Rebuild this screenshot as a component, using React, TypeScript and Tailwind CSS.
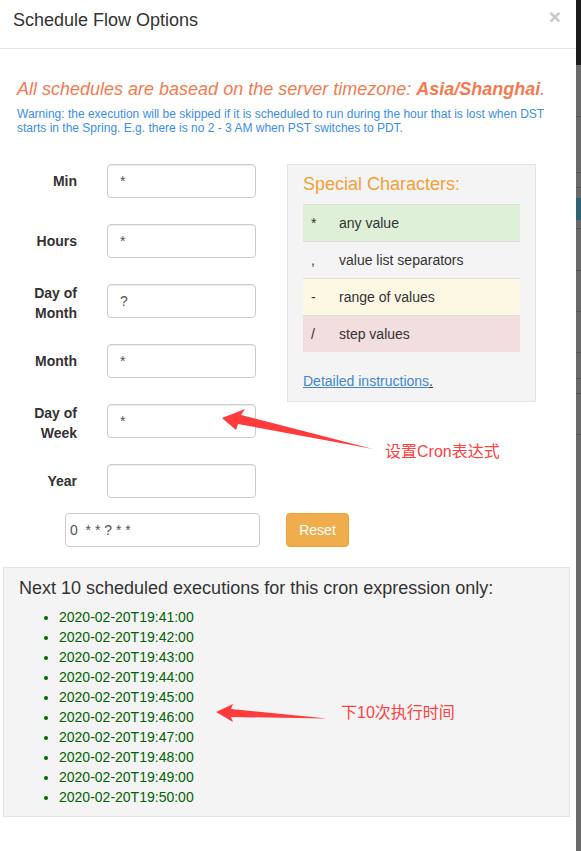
import React from 'react';

const fields = [
  { label: ['Min'], value: '*' },
  { label: ['Hours'], value: '*' },
  { label: ['Day of', 'Month'], value: '?' },
  { label: ['Month'], value: '*' },
  { label: ['Day of', 'Week'], value: '*' },
  { label: ['Year'], value: '' },
];

const specials = [
  { ch: '*', text: 'any value', bg: 'bg-[#dff0d8]' },
  { ch: ',', text: 'value list separators', bg: '' },
  { ch: '-', text: 'range of values', bg: 'bg-[#fcf8e3]' },
  { ch: '/', text: 'step values', bg: 'bg-[#f2dede]' },
];

const runs = [41, 42, 43, 44, 45, 46, 47, 48, 49, 50].map((m) => `2020-02-20T19:${m}:00`);

function FieldRow({ label, value }: { label: string[]; value: string }) {
  const twoLines = label.length > 1;
  return (
    <div className="flex items-start h-[34px]">
      <label
        className={`w-[77px] text-right font-bold text-[14px] leading-[20px] text-[#333] ${
          twoLines ? 'mt-[-1px]' : 'mt-[7px]'
        }`}
      >
        {label.map((l) => (
          <div key={l}>{l}</div>
        ))}
      </label>
      <input
        readOnly
        value={value}
        className="ml-[30px] h-[34px] w-[149px] rounded-[4px] border border-[#ccc] px-[12px] text-[14px] text-[#555] shadow-[inset_0_1px_1px_rgba(0,0,0,0.075)] outline-none"
      />
    </div>
  );
}

export default function App() {
  return (
    <div className="relative flex w-[581px] h-[851px] overflow-hidden bg-white font-['Liberation_Sans','Noto_Sans_CJK_SC',sans-serif] text-[#333]">
      <div className="flex w-[576px] flex-col">
        {/* header */}
        <div className="flex h-[49px] justify-between border-b border-[#e5e5e5]">
          <div className="pl-[13px] pt-[8px] text-[18px] leading-[24px]">Schedule Flow Options</div>
          <span className="mt-[6px] pr-[15px] text-[21px] font-bold leading-[21px] text-[#c8c8c8]">×</span>
        </div>

        <div className="px-[17px]">
          <p className="mt-[30px] text-[18px] italic leading-[20px] text-[#f47b50]">
            All schedules are basead on the server timezone: <b className="font-bold">Asia/Shanghai</b>.
          </p>
          <p className="mt-[8px] text-[12px] leading-[14px] text-[#3c8dee]">
            Warning: the execution will be skipped if it is scheduled to run during the hour that is lost when DST
            starts in the Spring. E.g. there is no 2 - 3 AM when PST switches to PDT.
          </p>
        </div>

        {/* cron fields + special chars */}
        <div className="mt-[29px] flex items-start">
          <div className="flex flex-col gap-[26px]">
            {fields.map((f) => (
              <FieldRow key={f.label.join(' ')} label={f.label} value={f.value} />
            ))}
          </div>
          <div className="ml-[31px] w-[249px] border border-[#e3e3e3] bg-[#f4f4f4] px-[15px] pt-[9px] pb-[10px]">
            <div className="text-[18px] leading-[20px] text-[#f3a03a]">Special Characters:</div>
            <table className="mt-[10px] w-full text-[14px] leading-[20px]">
              <tbody>
                {specials.map((s) => (
                  <tr key={s.ch} className={s.bg}>
                    <td className="w-[36px] border-t border-[#ddd] px-[8px] py-[8px]">{s.ch}</td>
                    <td className="border-t border-[#ddd] py-[8px]">{s.text}</td>
                  </tr>
                ))}
              </tbody>
            </table>
            <div className="mt-[19px] text-[14px] leading-[20px]">
              <span className="text-[#3f87d0] underline">Detailed instructions</span>
              <span className="underline">.</span>
            </div>
          </div>
        </div>

        {/* expression + reset */}
        <div className="mt-[15px] flex items-center">
          <input
            readOnly
            value="0  * * ? * *"
            className="ml-[65px] h-[34px] w-[195px] rounded-[4px] border border-[#ccc] px-[4px] text-[14px] text-[#555] outline-none"
          />
          <button className="ml-[26px] h-[34px] w-[63px] rounded-[4px] border border-[#eea236] bg-[#f0ad4e] text-[14px] text-white">
            Reset
          </button>
        </div>

        {/* next executions */}
        <div className="ml-[3px] mt-[20px] w-[567px] border border-[#e3e3e3] bg-[#f4f4f4] px-[15px] pt-[10px] pb-[9px]">
          <h4 className="text-[18px] leading-[20px]">Next 10 scheduled executions for this cron expression only:</h4>
          <ul className="mt-[9px] list-disc pl-[40px] text-[14px] leading-[20px] text-[#006400]">
            {runs.map((r) => (
              <li key={r}>{r}</li>
            ))}
          </ul>
        </div>
      </div>

      {/* backdrop strip behind the modal */}
      <div className="flex w-[5px] flex-col bg-[#6a6a6a]">
        <div className="h-[65px] bg-[#1c1c1c]" />
        <div className="h-[52px] border-b border-[#555]" />
        <div className="h-[56px] border-b border-[#555]" />
        <div className="h-[15px] border-b border-[#555]" />
        <div className="h-[10px]" />
        <div className="h-[22px] bg-[#2f6273]" />
        <div className="h-[9px] border-b border-[#555]" />
        <div className="h-[42px] border-b border-[#555]" />
        <div className="h-[41px] border-b border-[#555]" />
        <div className="h-[41px] border-b border-[#555]" />
        <div className="h-[26px] border-b border-[#555]" />
        <div className="h-[15px] border-b border-[#555]" />
        <div className="h-[41px] border-b border-[#555]" />
      </div>

      {/* red annotations */}
      <svg className="pointer-events-none absolute left-0 top-0" width="581" height="851">
        <polygon points="222,418 245,409 241,415 373,449 238,424 236,430" fill="#ff3b3b" />
        <polygon points="216,712 233,704 231,709 327,718.5 231,717 233,722" fill="#ff3b3b" />
      </svg>
      <span className="absolute left-[385px] top-[442px] text-[16px] leading-[20px] text-[#ff4141]">设置Cron表达式</span>
      <span className="absolute left-[341px] top-[703px] text-[16px] leading-[20px] text-[#ff4141]">下10次执行时间</span>
    </div>
  );
}
